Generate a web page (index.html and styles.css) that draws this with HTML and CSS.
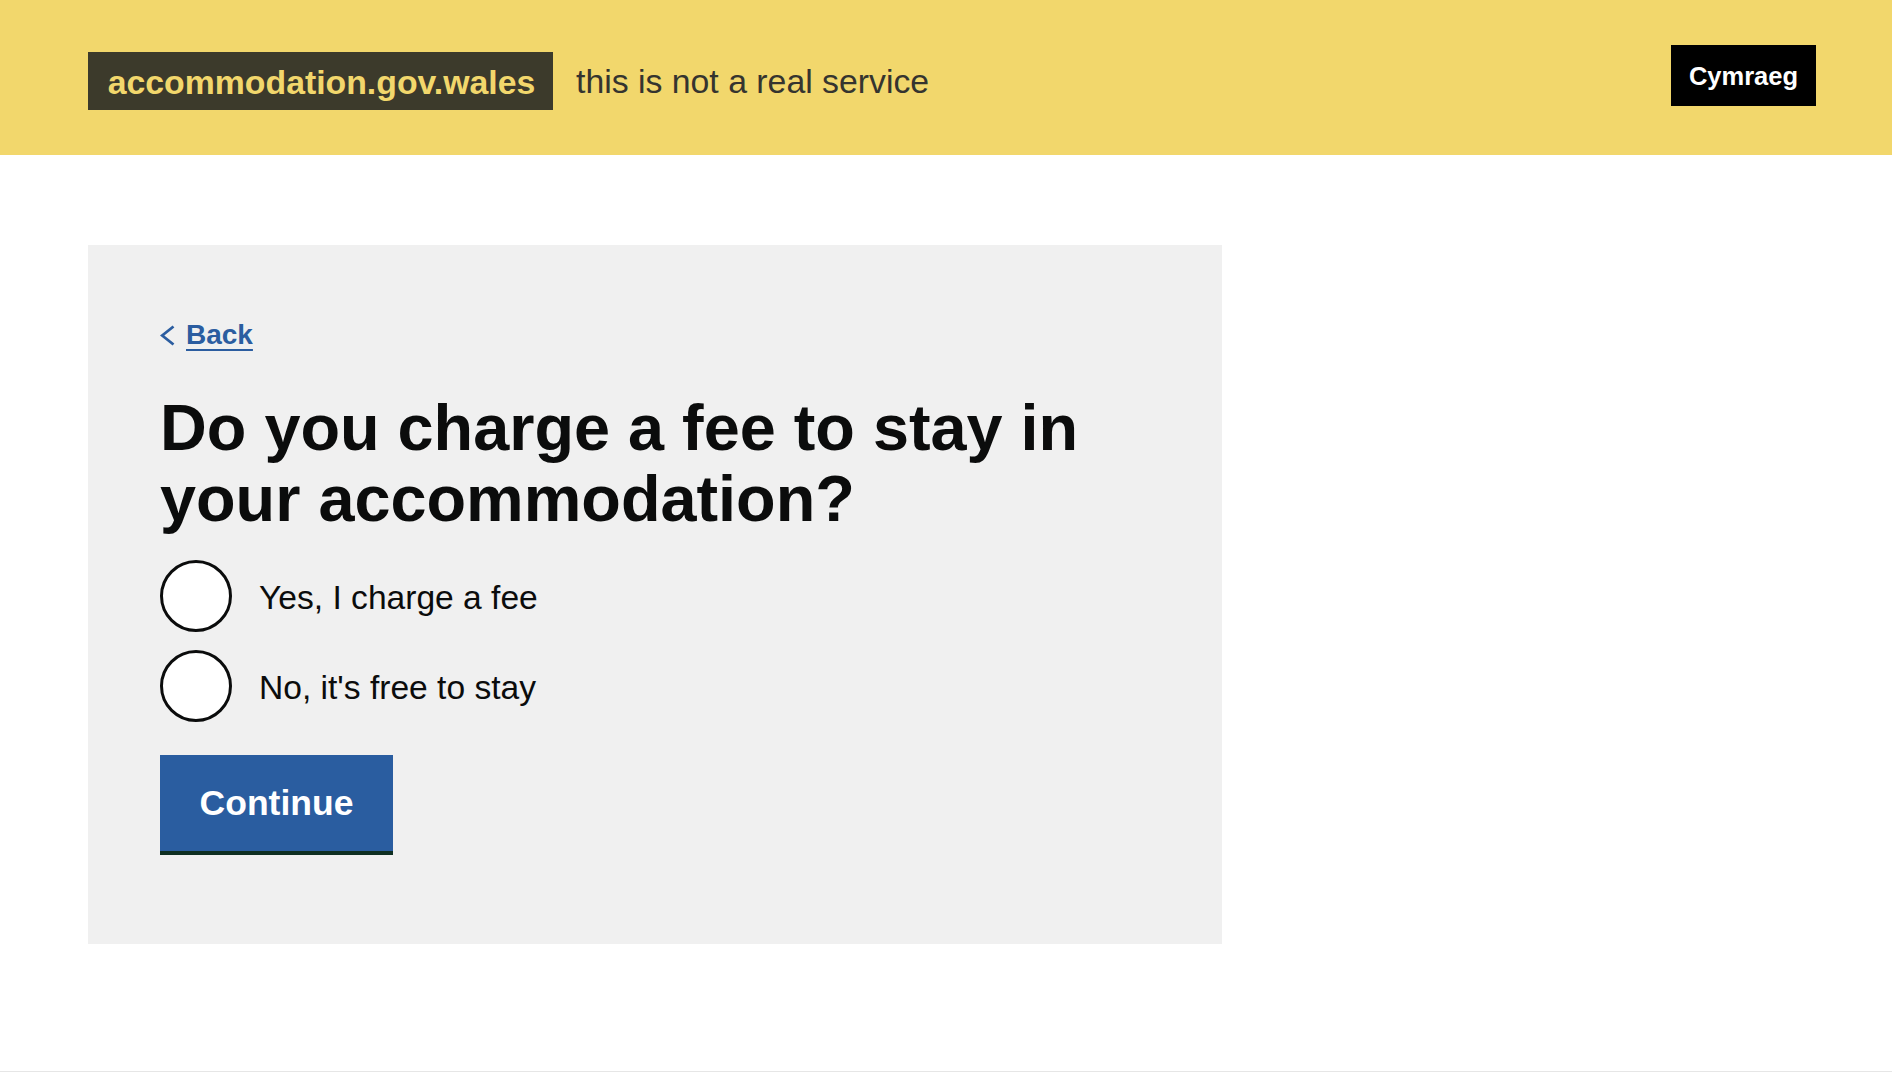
FILE: index.html
```html
<!DOCTYPE html>
<html lang="en">
<head>
<meta charset="utf-8">
<title>Do you charge a fee to stay in your accommodation?</title>
<link rel="stylesheet" href="styles.css">
</head>
<body>
<header class="site-header">
  <div class="brand">
    <span class="brand-logo">accommodation.gov.wales</span>
    <span class="brand-note">this is not a real service</span>
  </div>
  <a class="lang-btn" href="#">Cymraeg</a>
</header>
<main class="main">
  <div class="panel">
    <a class="back-link" href="#">
      <svg class="back-chevron" width="15" height="21" viewBox="0 0 15 21" aria-hidden="true"><path d="M13.5 1.5 L2.2 10.5 L13.5 19.5" fill="none" stroke="#2b5da0" stroke-width="2.8"/></svg>
      <span class="back-text">Back</span>
    </a>
    <h1 class="question">Do you charge a fee to stay in your accommodation?</h1>
    <div class="radios">
      <label class="radio-item"><span class="radio-circle"></span><span class="radio-label">Yes, I charge a fee</span></label>
      <label class="radio-item"><span class="radio-circle"></span><span class="radio-label">No, it's free to stay</span></label>
    </div>
    <button class="continue-btn" type="button">Continue</button>
  </div>
</main>
<footer class="site-footer"></footer>
</body>
</html>
```
FILE: styles.css
```css
html, body {
  margin: 0;
  padding: 0;
  background: #ffffff;
}
body {
  font-family: "Liberation Sans", Arial, sans-serif;
  color: #0b0c0c;
}
.site-header {
  background: #f2d76c;
  height: 155px;
  box-sizing: border-box;
  padding: 45px 76px 0 88px;
  display: flex;
  justify-content: space-between;
  align-items: flex-start;
}
.brand {
  display: flex;
  align-items: center;
  margin-top: 6px;
}
.brand-logo {
  background: #3c3a2b;
  color: #f2d76c;
  font-weight: 700;
  font-size: 33.8px;
  height: 58px;
  width: 465px;
  box-sizing: border-box;
  text-align: center;
  line-height: 60px;
  padding: 0 14px 0 16px;
}
.brand-note {
  color: #35342f;
  font-size: 33.8px;
  margin-left: 23px;
  line-height: 60px;
}
.lang-btn {
  background: #000000;
  color: #ffffff;
  text-decoration: none;
  font-weight: 700;
  font-size: 25.5px;
  height: 61px;
  line-height: 62px;
  padding: 0 10px;
  box-sizing: border-box;
  width: 145px;
  text-align: center;
}
.main {
  padding: 90px 0 0 88px;
}
.panel {
  width: 1134px;
  box-sizing: border-box;
  background: #f0f0f0;
  padding: 74px 72px 93px 72px;
}
.back-link {
  display: flex;
  align-items: center;
  height: 32px;
  color: #2b5da0;
  text-decoration: none;
  font-weight: 700;
  font-size: 28px;
  line-height: 32px;
}
.back-chevron {
  display: block;
  flex: none;
  margin: 1px 11px 0 0;
}
.back-text {
  text-decoration: underline;
  text-decoration-thickness: 2px;
  text-underline-offset: 5px;
}
.question {
  margin: 41px 0 0 0;
  font-size: 64.8px;
  line-height: 71px;
  font-weight: 700;
  color: #0b0c0c;
  max-width: 940px;
}
.radios {
  margin-top: 26px;
  display: flex;
  flex-direction: column;
  gap: 18px;
}
.radio-item {
  display: flex;
  align-items: center;
  height: 72px;
}
.radio-circle {
  width: 72px;
  height: 72px;
  box-sizing: border-box;
  border: 3px solid #0b0c0c;
  border-radius: 50%;
  background: #ffffff;
  flex: none;
}
.radio-label {
  margin-left: 27px;
  font-size: 33.6px;
  padding-top: 4px;
  color: #0b0c0c;
}
.continue-btn {
  display: block;
  margin-top: 33px;
  height: 96px;
  padding: 0;
  border: 0;
  background: #2a5da0;
  color: #ffffff;
  font-family: "Liberation Sans", Arial, sans-serif;
  font-weight: 700;
  font-size: 35.5px;
  line-height: 96px;
  box-shadow: 0 4px 0 #0f2f22;
  width: 233px;
  text-align: center;
}
.site-footer {
  margin-top: 127px;
  border-top: 1px solid #e6e6e6;
  height: 40px;
}
```
